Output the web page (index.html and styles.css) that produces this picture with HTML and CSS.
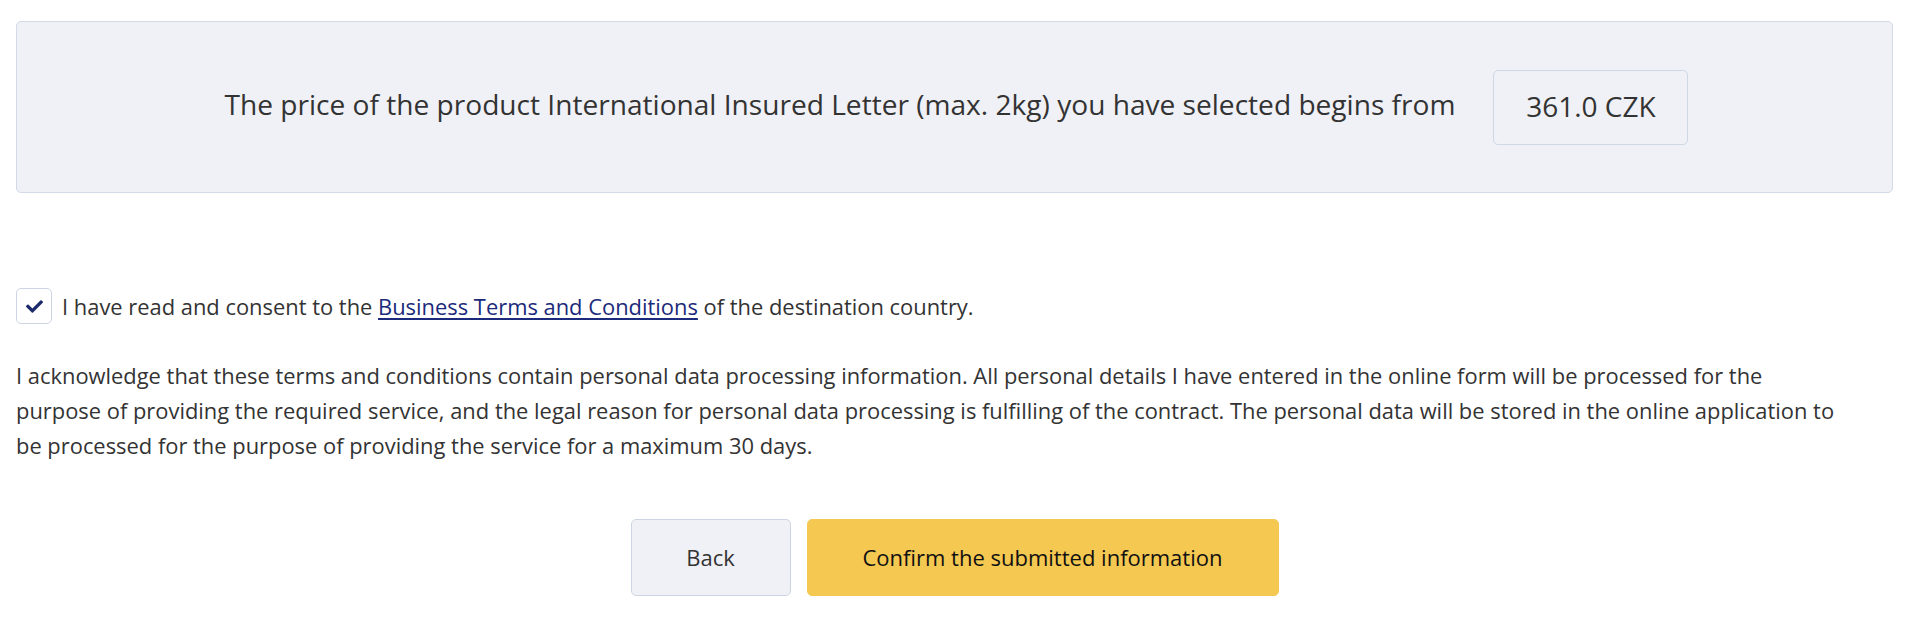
FILE: index.html
```html
<!DOCTYPE html>
<html lang="en">
<head>
<meta charset="utf-8">
<title>Order summary</title>
<link rel="stylesheet" href="styles.css">
</head>
<body>
<div class="page">
  <div class="price-box">
    <span class="price-text">The price of the product International Insured Letter (max. 2kg) you have selected begins from</span>
    <span class="price-value">361.0 CZK</span>
  </div>

  <label class="consent">
    <span class="checkbox">
      <svg class="check" viewBox="0 0 512 512" width="17" height="17" aria-hidden="true"><path d="M173.898 439.404l-166.4-166.4c-9.997-9.997-9.997-26.206 0-36.204l36.203-36.204c9.997-9.998 26.207-9.998 36.204 0L192 312.69 432.095 72.596c9.997-9.997 26.207-9.997 36.204 0l36.203 36.204c9.997 9.997 9.997 26.206 0 36.204l-294.4 294.401c-9.998 9.997-26.207 9.997-36.204-.001z"/></svg>
    </span>
    <span class="consent-text">I have read and consent to the <a href="#" class="link">Business Terms and Conditions</a> of the destination country.</span>
  </label>

  <p class="notice">I acknowledge that these terms and conditions contain personal data processing information. All personal details I have entered in the online form will be processed for the purpose of providing the required service, and the legal reason for personal data processing is fulfilling of the contract. The personal data will be stored in the online application to be processed for the purpose of providing the service for a maximum 30 days.</p>

  <div class="actions">
    <button class="btn btn-back" type="button">Back</button>
    <button class="btn btn-confirm" type="button">Confirm the submitted information</button>
  </div>
</div>
</body>
</html>
```

FILE: styles.css
```css
html, body {
  margin: 0;
  padding: 0;
  background: #ffffff;
}

body {
  font-family: "Open Sans", "Liberation Sans", sans-serif;
  color: #333333;
}

.page {
  padding: 21px 27px 0 16px;
}

.price-box {
  box-sizing: border-box;
  height: 172px;
  background: #f0f1f6;
  border: 1px solid #d3d9e6;
  border-radius: 5px;
  display: flex;
  align-items: center;
  justify-content: center;
  gap: 38px;
  padding-left: 4px;
}

.price-text {
  font-size: 28.1px;
  color: #333333;
  padding-bottom: 6px;
}

.price-value {
  box-sizing: border-box;
  width: 195px;
  height: 75px;
  display: flex;
  align-items: center;
  justify-content: center;
  border: 1px solid #d0d7e5;
  border-radius: 5px;
  font-size: 28px;
  color: #333333;
  padding-bottom: 2px;
}

.consent {
  display: flex;
  align-items: center;
  gap: 10px;
  margin-top: 95px;
  font-size: 21.9px;
}

.checkbox {
  box-sizing: border-box;
  width: 36px;
  height: 36px;
  border: 1px solid #cdd5e4;
  border-radius: 5px;
  background: #ffffff;
  display: flex;
  align-items: center;
  justify-content: center;
  flex-shrink: 0;
}

.check {
  fill: #1b2a6b;
}

.link {
  color: #1b2a7a;
  text-decoration: underline;
  text-underline-offset: 3px;
}

.notice {
  margin: 34px 0 0 0;
  max-width: 1830px;
  font-size: 21.9px;
  line-height: 35.2px;
}

.actions {
  display: flex;
  justify-content: center;
  gap: 16px;
  margin-top: 55px;
}

.btn {
  box-sizing: border-box;
  height: 77px;
  border-radius: 5px;
  font-family: "Open Sans", "Liberation Sans", sans-serif;
  font-size: 22px;
  cursor: pointer;
}

.btn-back {
  width: 160px;
  background: #f0f1f6;
  border: 1px solid #cdd5e4;
  color: #333333;
}

.btn-confirm {
  width: 472px;
  background: #f4c851;
  border: 1px solid #f4c851;
  color: #111111;
}
```
